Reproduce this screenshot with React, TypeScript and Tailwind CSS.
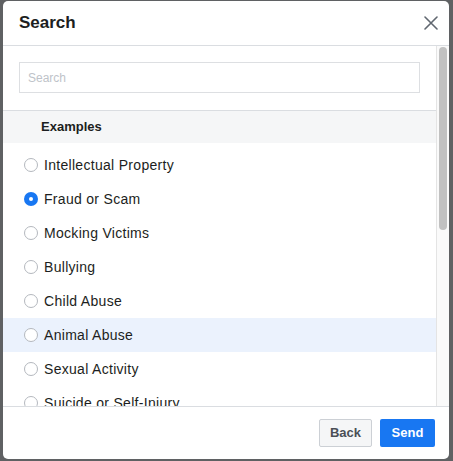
import React, { useState } from "react";

const items = [
  "Intellectual Property",
  "Fraud or Scam",
  "Mocking Victims",
  "Bullying",
  "Child Abuse",
  "Animal Abuse",
  "Sexual Activity",
  "Suicide or Self-Injury",
  "Hate Speech",
];

const Radio = ({ checked }: { checked: boolean }) =>
  checked ? (
    <span className="w-[14px] h-[14px] rounded-full bg-[#1877f2] flex items-center justify-center shrink-0">
      <span className="w-[4px] h-[4px] rounded-full bg-white" />
    </span>
  ) : (
    <span className="w-[14px] h-[14px] rounded-full border border-[#b4b8be] bg-white shrink-0" />
  );

export default function App() {
  const [selected, setSelected] = useState("Fraud or Scam");
  return (
    <div
      className="w-[453px] h-[461px] bg-[#5f6163] pt-[1px] pl-[3px] overflow-hidden"
      style={{ fontFamily: '"Liberation Sans", Arial, sans-serif' }}
    >
      <div className="w-[446px] h-[458px] bg-white rounded-[5px] flex flex-col overflow-hidden">
        <div className="h-[45px] border-b border-[#dadde1] flex items-center justify-between pl-[16px] pr-[11px] shrink-0">
          <h2 className="text-[17px] font-bold text-[#1c1e21]">Search</h2>
          <svg width="14" height="14" viewBox="0 0 14 14" className="text-[#606770]">
            <path d="M1 1L13 13M13 1L1 13" stroke="currentColor" strokeWidth="1.6" strokeLinecap="round" />
          </svg>
        </div>

        <div className="flex h-[360px] shrink-0">
          <div className="w-[433px] overflow-hidden">
            <div className="pt-[16px] pb-[17px] pl-[16px] pr-[16px]">
              <input
                placeholder="Search"
                className="w-[401px] h-[31px] border border-[#dddfe2] px-[8px] text-[12px] text-[#1c1e21] placeholder:text-[#bec3c9] outline-none"
              />
            </div>
            <div className="border-t border-[#dadde1] h-[33px] bg-[#f5f6f7] flex items-center pl-[38px]">
              <span className="text-[13px] font-bold text-[#1c1e21]">Examples</span>
            </div>
            <div className="pt-[5px]">
              {items.map((item) => (
                <div
                  key={item}
                  onClick={() => setSelected(item)}
                  className={
                    "h-[34px] flex items-center gap-[6px] pl-[21px] cursor-pointer " +
                    (item === "Animal Abuse" ? "bg-[#ebf2fd]" : "")
                  }
                >
                  <Radio checked={selected === item} />
                  <span className="text-[14px] tracking-[0.3px] text-[#1c1e21]">{item}</span>
                </div>
              ))}
            </div>
          </div>
          <div className="w-[13px] border-l border-[#e4e4e4] bg-[#fafafa] pt-[1px] pl-[2px]">
            <div className="w-[8px] h-[183px] rounded-full bg-[#c1c1c1]" />
          </div>
        </div>

        <div className="flex-1 border-t border-[#dadde1] flex items-center justify-end gap-[8px] pr-[14px]">
          <button className="w-[53px] h-[28px] rounded-[2px] border border-[#ccd0d5] bg-[#f5f6f7] text-[13px] font-bold text-[#4b4f56]">
            Back
          </button>
          <button className="w-[55px] h-[28px] rounded-[2px] bg-[#1877f2] text-[13px] font-bold text-white">
            Send
          </button>
        </div>
      </div>
    </div>
  );
}
